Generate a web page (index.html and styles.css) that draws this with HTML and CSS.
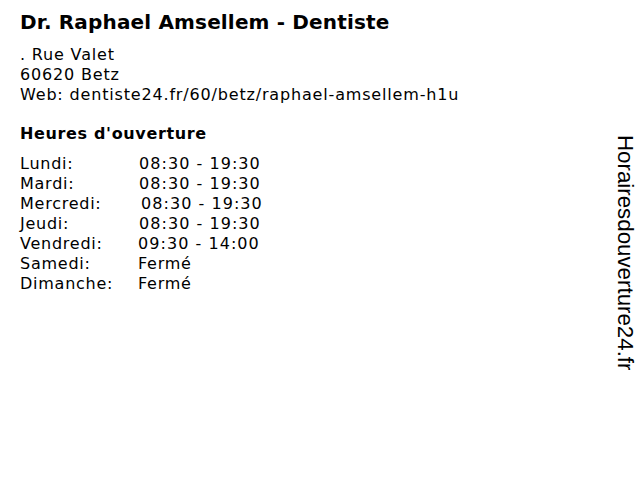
FILE: index.html
```html
<!DOCTYPE html>
<html>
<head>
<meta charset="utf-8">
<link rel="stylesheet" href="styles.css">
</head>
<body>
<div class="page">
  <div class="main">
    <h1 class="title">Dr. Raphael Amsellem - Dentiste</h1>
    <div class="address">
      <div>. Rue Valet</div>
      <div>60620 Betz</div>
      <div>Web: dentiste24.fr/60/betz/raphael-amsellem-h1u</div>
    </div>
    <h2 class="heading">Heures d'ouverture</h2>
    <div class="hours">
      <span>Lundi:</span><span class="time">08:30 - 19:30</span>
      <span>Mardi:</span><span class="time">08:30 - 19:30</span>
      <span>Mercredi:</span><span class="time shift">08:30 - 19:30</span>
      <span>Jeudi:</span><span class="time">08:30 - 19:30</span>
      <span>Vendredi:</span><span class="time back">09:30 - 14:00</span>
      <span>Samedi:</span><span class="back">Fermé</span>
      <span>Dimanche:</span><span class="back">Fermé</span>
    </div>
  </div>
  <div class="side"><span class="vtext">Horairesdouverture24.fr</span></div>
</div>
</body>
</html>
```

FILE: styles.css
```css
html, body {
  margin: 0;
  padding: 0;
  background: #ffffff;
}
.page {
  width: 640px;
  height: 480px;
  display: flex;
  justify-content: space-between;
  font-family: "DejaVu Sans", sans-serif;
  color: #000;
}
.main {
  padding: 8px 0 0 20px;
}
.title {
  margin: 0;
  font-size: 20px;
  font-weight: bold;
  line-height: 28px;
  letter-spacing: 0.16px;
}
.address {
  margin-top: 9px;
  font-size: 16px;
  line-height: 20px;
  letter-spacing: 0.83px;
}
.heading {
  margin: 18px 0 0 0;
  font-size: 16px;
  font-weight: bold;
  line-height: 22px;
  letter-spacing: 0.65px;
}
.hours {
  margin-top: 9px;
  display: grid;
  grid-template-columns: 119px auto;
  font-size: 16px;
  line-height: 20px;
  letter-spacing: 0.75px;
}
.time { letter-spacing: 1.05px; }
.shift { padding-left: 2px; }
.back { margin-left: -1px; }
.side {
  width: 40px;
  display: flex;
  justify-content: flex-end;
  padding-top: 135px;
  padding-right: 3px;
}
.vtext {
  writing-mode: vertical-rl;
  font-family: "Liberation Sans", Arial, sans-serif;
  font-size: 22.3px;
  line-height: 24px;
  height: max-content;
}
```
